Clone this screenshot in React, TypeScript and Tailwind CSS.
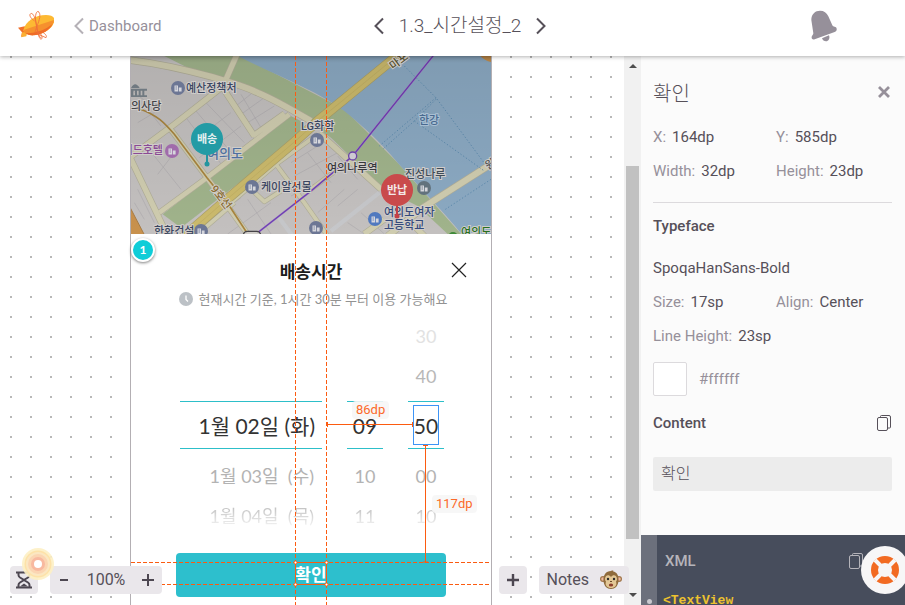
import type { ReactNode } from "react";

const KR = "font-['Roboto','Noto_Sans_CJK_KR',sans-serif]";

function Logo() {
  return (
    <svg width="36" height="30" viewBox="0 0 108 90" aria-hidden="true">
      <path d="M0 50l20-4 8 20-19 12 3-14z" fill="#f0702a" />
      <path d="M12 64l16 0-3 12-15 3z" fill="#fbb034" />
      <path d="M16 58C22 30 52 12 84 12c14 0 24 4 25 12 2 22-24 44-58 48-20 2-32-4-35-14z" fill="#fdb933" />
      <path d="M16 57l92-30c-2 22-26 42-58 45-20 2-32-5-34-15z" fill="#f6912e" />
      <path d="M23 66c24 2 54-6 80-26-9 18-30 30-54 33-12 1-20-2-26-7z" fill="#ef6c27" />
      <g fill="none" stroke="#f0703a" strokeWidth="2.6">
        <path d="M50 30C38 22 32 12 38 8s14 10 18 36 8 42 14 40 0-16-14-28" />
        <path d="M62 2c-8-4-12 14-8 36s10 44 16 42M60 2c6 2 8 12 2 30s-16 38-6 30M56 68l28 12c4-4-2-12-10-16" />
      </g>
    </svg>
  );
}

function Chevron({ dir, className }: { dir: "left" | "right"; className: string }) {
  return (
    <svg width="10" height="18" viewBox="0 0 10 18" fill="none" strokeWidth="2" className={className} aria-hidden="true">
      <path d={dir === "left" ? "M9 1.500L1.500 9L9 16.500" : "M1 1.500L8.500 9L1 16.500"} stroke="currentColor" />
    </svg>
  );
}

function BellIcon() {
  return (
    <svg width="28" height="32" viewBox="0 0 84 96" fill="#96909a" aria-hidden="true">
      <path d="M4 30C4 12 16 2 30 2c12 0 20 6 25 17l12 27c2 5 12 3 13 10 1 5-2 8-6 10L14 88c-6 2-10-2-9-7 0-4 5-6 5-11z" />
      <path d="M36 85l21-9c4 10-2 18-9 18-6 0-10-3-12-9z" />
    </svg>
  );
}

function CopyIcon() {
  return (
    <svg width="14" height="16" viewBox="0 0 14 16" fill="none" stroke="currentColor" aria-hidden="true">
      <rect x=".5" y="2.500" width="10" height="13" rx="1.500" />
      <path d="M3.500 2.500V1.500a1 1 0 0 1 1-1h7.500a1.500 1.500 0 0 1 1.500 1.500v10a1 1 0 0 1-1 1h-2" />
    </svg>
  );
}

function Header() {
  return (
    <header className="relative z-20 grid h-14 shrink-0 grid-cols-[1fr_auto_1fr] items-center bg-white pl-[18px] pr-[3px] shadow-[0_1px_4px_rgba(0,0,0,0.3)]">
      <div className="flex items-center gap-5 pb-1">
        <a href="#home" aria-label="Home">
          <Logo />
        </a>
        <a href="#dashboard" className="flex items-center gap-[5px] text-[15px] text-[#96909a]">
          <Chevron dir="left" className="text-[#b5b1b7]" />
          Dashboard
        </a>
      </div>
      <nav className="flex items-center gap-[15px] pb-1 text-[#565059]">
        <button aria-label="Previous screen">
          <Chevron dir="left" className="text-[#565059]" />
        </button>
        <h1 className="text-[19px] leading-7 font-light">1.3_시간설정_2</h1>
        <button aria-label="Next screen">
          <Chevron dir="right" className="text-[#565059]" />
        </button>
      </nav>
      <button aria-label="Notifications" className="mr-16 justify-self-end pb-1">
        <BellIcon />
      </button>
    </header>
  );
}

function MapIcon({ x, y, fill = "#6c7694" }: { x: number; y: number; fill?: string }) {
  return (
    <g transform={`translate(${x} ${y})`}>
      <circle r="7" fill={fill} />
      <path d="M-3.500 3.500v-6h3.500v6zM.8 3.500v-4h2.800v4z" fill="#d5d6dc" />
      <path d="M-2.500-1h1.500M-2.500 1h1.500" stroke={fill} strokeWidth=".8" />
    </g>
  );
}

const places = [
  { x: 61, y: 42, text: "예산정책처", fill: "#3a4560" },
  { x: 6, y: 60, text: "의사당", fill: "#444448" },
  { x: 176, y: 80, text: "LG화학", fill: "#3a4560" },
  { x: 136, y: 141, text: "케이알선물", fill: "#3a4560" },
  { x: 29, y: 185, text: "한화건설", fill: "#3a4560" },
  { x: 202, y: 122, text: "여의나루역", fill: "#38383c" },
  { x: 280, y: 128, text: "진성나루", fill: "#3f4c58" },
  { x: 259, y: 166, text: "여의도여자", fill: "#354a7a" },
  { x: 259, y: 179, text: "고등학교", fill: "#354a7a" },
  { x: 336, y: 186, text: "여의도", fill: "#28701f" },
];

function CityMap() {
  return (
    <svg viewBox="6 6 360 178" preserveAspectRatio="xMidYMid slice" className="block h-[178px] w-full" role="img" aria-label="여의도">
      <defs>
        <linearGradient id="shade" x1="0" y1="0" x2="0" y2="1">
          <stop offset="0" stopColor="#000" stopOpacity=".15" />
          <stop offset=".04" stopColor="#000" stopOpacity=".08" />
          <stop offset="1" stopColor="#000" stopOpacity="0" />
        </linearGradient>
      </defs>
      <rect x="6" y="6" width="360" height="178" fill="#c3c0bf" />
      <g transform="translate(6 6) scale(.33333)">
        {/* Park and river */}
        <path d="M100 0H330L640 160 800 320 990 534H950L860 450 760 400 600 245 520 190 440 140 330 90 200 50Z" fill="#a0b38b" />
        <path d="M320 0H1080V534H992C960 495 945 480 900 430C860 385 840 365 800 320C750 260 690 205 640 165C560 105 440 60 320 0Z" fill="#8ba9c2" />
        <path d="M95 475L475 178 520 200 500 245 150 515Z" fill="#a0b38b" />
        {/* Lots */}
        <g fill="none" stroke="#adaaae" strokeWidth="2">
          <path d="M165 185L275 330M195 165L310 300M225 140L340 260M175 265L300 170M205 305L330 210M315 150L365 110M330 175L400 125M350 200L430 150M330 115L390 215M50 275L150 400M80 355L130 290M0 100L60 150M50 160L90 210M20 200L70 170" />
          <path d="M250 480L330 425M290 534L420 440M350 430L420 534M480 320L560 270M490 360L620 290M530 290L600 380M620 300L680 370M640 400L560 470M680 400L620 450M480 420L560 380M650 500L700 534M690 470L760 534M360 360L420 400M190 534L260 480M20 400L70 500M10 440L40 490" />
        </g>
        {/* Street outlines, then surfaces */}
        {[
          { c: "#b0ad98", w: 4 },
          { c: "#cfccaf", w: 0 },
        ].map(({ c, w }) => (
          <g key={c} fill="none" stroke={c} strokeLinejoin="round">
            <path d="M-5 12C80 22 160 40 240 62C300 80 340 90 380 110C430 130 480 160 540 195" strokeWidth={18 + w} />
            <path d="M318 -5L285 70M290 80L130 205 -5 305M275 95L370 240M-5 300L110 540" strokeWidth={16 + w} />
            <path d="M115 215L228 365 350 534M85 470L228 365 475 175M365 240L460 172" strokeWidth={14 + w} />
            <path d="M300 440L435 325 560 235M435 325L520 440 590 540M345 385L400 437 465 395M520 415L640 325M200 534L310 440" strokeWidth={11 + w} />
            <path d="M565 232L750 400M700 534L760 490M840 500L880 540" strokeWidth={16 + w} />
            <path d="M770 540L880 452 1090 318" strokeWidth={18 + w} />
          </g>
        ))}
        <path d="M600 525L745 410M440 480L485 540" stroke="#c6c7ca" strokeWidth="13" />
        <path d="M155 545L290 428 490 258 560 195 810 -10" fill="none" stroke="#aa9f68" strokeWidth="30" />
        <path d="M155 545L290 428 490 258 560 195 810 -10" fill="none" stroke="#cbba6c" strokeWidth="26" />
        <path d="M155 545L290 428 490 258 560 195 810 -10" fill="none" stroke="#beac60" strokeWidth="2" />
        <path d="M-5 450L42 540H-5Z" fill="#c8914d" stroke="#a77b45" strokeWidth="3" />
        <path d="M1040 -10Q1060 18 1085 18V-10Z" fill="#c8914d" />
        {/* Ferry routes */}
        <path
          d="M820 30L915 125L1070 335M915 125L745 270M850 195L755 280M915 130L850 195M850 195L1060 345M1080 370L940 462"
          fill="none"
          stroke="#5d8bae"
          strokeWidth="3"
          strokeDasharray="4 6"
        />
        <path d="M25 158C80 178 100 200 130 235L228 365 290 442 350 534" fill="none" stroke="#a8843e" strokeWidth="5" />
        <path d="M375 534L540 405 665 300 910 -5" fill="none" stroke="#a893c6" strokeWidth="6" />
        <path d="M375 534L540 405 665 300 910 -5" fill="none" stroke="#713fb5" strokeWidth="4" />
        <circle cx="665" cy="300" r="12" fill="#d5d2da" stroke="#7045ae" strokeWidth="4" />
        <rect x="337" y="526" width="52" height="24" rx="12" fill="#d0cdc9" stroke="#454347" strokeWidth="4" />
        <path d="M-5 98H48V104H-5ZM0 96Q12 74 26 96ZM0 104H7V118H0ZM12 104H18V118H12ZM23 104H29V118H23ZM34 104H40V118H34ZM-5 118H48V123H-5Z" fill="#78828a" />
      </g>
      <rect x="6" y="6" width="360" height="178" fill="url(#shade)" />
      <MapIcon x={53} y={38} />
      <MapIcon x={47} y={101} fill="#a06bab" />
      <MapIcon x={127} y={137} />
      <MapIcon x={76} y={181} />
      <MapIcon x={192} y={90} />
      <MapIcon x={191} y={178} />
      <MapIcon x={299} y={138} fill="#62727d" />
      <MapIcon x={250} y={169} fill="#5079bf" />
      <circle cx="328" cy="187" r="5" fill="#3f8a38" />
      <g className="text-[11px] font-medium" stroke="#cfccca" strokeWidth="2" paintOrder="stroke">
        {places.map((p) => (
          <text key={p.text} x={p.x} y={p.y} fill={p.fill}>
            {p.text}
          </text>
        ))}
        <text x="82" y="108" fill="#4d6f9f" className="text-[13px]">
          여의도
        </text>
        <text x="294" y="74" fill="#48698f" stroke="#a9bfd2">
          한강
        </text>
        <text x="38" y="104" textAnchor="end" fill="#8a4a94">
          콘래드호텔
        </text>
        <text x="85" y="139" transform="rotate(52 85 139)" fill="#8a6d2f">
          9호선
        </text>
        <text x="268" y="20" transform="rotate(-37 268 20)" fill="#55502f">
          마포
        </text>
        <text x="363" y="120" transform="rotate(-32 363 120)" fill="#555">
          원
        </text>
      </g>
      {/* Pick-up and return pins */}
      <g textAnchor="middle" className="text-[11px] font-bold">
        <path d="M82 102V114" stroke="#23959f" strokeWidth="2" />
        <circle cx="82" cy="114" r="2.500" fill="#23959f" />
        <circle cx="82" cy="89" r="16" fill="#239ba5" />
        <text x="82" y="93" fill="#e6f0f0">
          배송
        </text>
        <path d="M272 152V165" stroke="#c44146" strokeWidth="2" />
        <circle cx="272" cy="166" r="2.500" fill="#c44146" />
        <circle cx="272" cy="140" r="16" fill="#c94a4b" />
        <text x="272" y="144" fill="#f3e8e8">
          반납
        </text>
      </g>
    </svg>
  );
}

type Cell = { text: string; tone: string };

function PickerColumn({
  before,
  selected,
  after,
  className,
}: {
  before: Cell[];
  selected: Cell;
  after: Cell[];
  className: string;
}) {
  return (
    <div className={`flex flex-col justify-end text-lg ${className}`}>
      {before.map((c) => (
        <div key={c.text} className={`h-10 leading-10 ${c.tone}`}>
          {c.text}
        </div>
      ))}
      <div className={`mt-[5px] mb-[7px] h-12 border-y border-[#2dbfc9] text-[21px] leading-[48px] ${selected.tone}`}>{selected.text}</div>
      {after.map((c) => (
        <div key={c.text} className={`h-10 leading-10 whitespace-pre ${c.tone}`}>
          {c.text}
        </div>
      ))}
    </div>
  );
}

const picked = "text-[#333]";
const fadeNear = "text-[#b3b3b3]";
const fadeFar = "bg-gradient-to-b from-[#c4c4c4] from-30% to-[#f2f2f2] to-75% bg-clip-text text-transparent";

function Sheet() {
  return (
    <section className="relative px-[45px] pt-6 font-['Lato','Noto_Sans_CJK_KR',sans-serif]">
      <span className="absolute top-1 left-0 flex size-6 items-center justify-center rounded-full border-2 border-white bg-[#10cdd8] text-xs font-bold text-white shadow-[0_1px_3px_rgba(0,0,0,0.5)]">
        1
      </span>
      <h2 className="text-center text-[17px] leading-7 font-bold text-[#1c1c1c]">배송시간</h2>
      <button aria-label="닫기" className="absolute top-7 right-6">
        <svg width="16" height="16" viewBox="0 0 16 16" stroke="#222" strokeWidth="1.200">
          <path d="M1 1l14 14M15 1L1 15" />
        </svg>
      </button>
      <p className="-mx-2 mt-[3px] flex items-center justify-center gap-[6px] pl-1 text-[13px] leading-5 whitespace-nowrap text-[#929292]">
        <svg width="14" height="14" viewBox="0 0 14 14" className="shrink-0">
          <circle cx="7" cy="7" r="7" fill="#bcc1c6" />
          <path d="M7 3.500V7.500l2 2" fill="none" stroke="#fff" strokeWidth="1.300" />
        </svg>
        현재시간 기준, 1시간 30분 부터 이용 가능해요
      </p>
      <div className="mt-[7px] flex justify-center gap-[25px] pr-[2px] pl-1">
        <PickerColumn
          className="w-[142px] text-right"
          before={[]}
          selected={{ text: "1월 02일 (화)", tone: `pr-[7px] ${picked}` }}
          after={[
            { text: "1월 03일  (수)", tone: `pr-2 ${fadeNear}` },
            { text: "1월 04일  (목)", tone: `pr-2 ${fadeFar}` },
          ]}
        />
        <PickerColumn
          className="w-9 text-center"
          before={[]}
          selected={{ text: "09", tone: picked }}
          after={[
            { text: "10", tone: fadeNear },
            { text: "11", tone: fadeFar },
          ]}
        />
        <PickerColumn
          className="w-9 text-center"
          before={[
            { text: "30", tone: "text-[#e2e2e2]" },
            { text: "40", tone: "text-[#b8b8b8]" },
          ]}
          selected={{ text: "50", tone: picked }}
          after={[
            { text: "00", tone: fadeNear },
            { text: "10", tone: fadeFar },
          ]}
        />
      </div>
      <button className="mt-[17px] h-11 w-full rounded bg-[#2dbfcd] text-[17px] font-bold text-white">확인</button>
    </section>
  );
}

function Measurements() {
  return (
    <div className="pointer-events-none absolute inset-0">
      <svg className="absolute inset-0 h-full w-full" fill="none" stroke="#fc5b10">
        <g strokeDasharray="4 2">
          <path d="M164.500 0V900M195.500 0V900" />
          <path d="M0 506.500H360M0 528.500H360" />
        </g>
        <path d="M164.500 506.500h31v22h-31z" />
        <g fill="#fff">
          <circle cx="164.500" cy="506.500" r="1.500" />
          <circle cx="195.500" cy="506.500" r="1.500" />
          <circle cx="164.500" cy="528.500" r="1.500" />
          <circle cx="195.500" cy="528.500" r="1.500" />
        </g>
        <path d="M196 368.500h86M196.500 366v5M281.500 366v5M294.500 389V506M292 389.500h5M292 506h5" />
        <rect x="282.500" y="349.500" width="25" height="39" stroke="#3d94f6" />
      </svg>
      <span className="absolute top-[345px] left-[221px] rounded-sm bg-[#f6f6f6]/90 px-1 text-[13px] leading-[18px] text-[#fc6a2a]">86dp</span>
      <span className="absolute top-[439px] left-[301px] rounded-sm bg-[#f6f6f6]/90 px-1 text-[13px] leading-[18px] text-[#fc6a2a]">117dp</span>
    </div>
  );
}

function Monkey() {
  return (
    <svg width="22" height="20" viewBox="0 0 22 20" aria-hidden="true">
      <circle cx="3" cy="9" r="3" fill="#a0764a" />
      <circle cx="19" cy="9" r="3" fill="#a0764a" />
      <circle cx="3" cy="9" r="1.800" fill="#f0b8a0" />
      <circle cx="19" cy="9" r="1.800" fill="#f0b8a0" />
      <path d="M11 1c2-1 3 0 2 .6C17 2 19 6 18.500 11c-.4 5-3.500 8-7.500 8s-7.100-3-7.500-8C3 5 6 1 11 1z" fill="#8f6b3c" />
      <path d="M11 7c2-3 6-2 6 2 0 1-.5 2-1 2.500 1.500 4-1.500 6.500-5 6.500s-6.500-2.500-5-6.500C5.500 11 5 10 5 9c0-4 4-5 6-2z" fill="#e3c795" />
      <circle cx="8" cy="9" r="1.200" fill="#2c2c2c" />
      <circle cx="14" cy="9" r="1.200" fill="#2c2c2c" />
      <path d="M10 11.500h2" stroke="#6b4a28" />
      <ellipse cx="11" cy="15" rx="2.200" ry="1.500" fill="#8d3f2c" />
    </svg>
  );
}

const chip = "flex h-7 items-center rounded bg-[#eae7eb] text-[#565059]";

function Toolbar() {
  return (
    <div className="absolute right-3 bottom-[11px] left-[10px] flex justify-between">
      <div className="flex gap-3">
        <button aria-label="History" className={`${chip} relative w-7 justify-center`}>
          <svg width="16" height="18" viewBox="0 0 16 18" fill="none" stroke="#4d4751" strokeWidth="2">
            <path d="M0 1.500H16M0 16.500H16M2.500 2V4Q2.500 5.500 4 6.500L8 9 4 11.500Q2.500 12.500 2.500 14V16M13.500 2V4Q13.500 5.500 12 6.500L8 9l4 2.500Q13.500 12.500 13.500 14V16" />
            <path d="M4 15.500L8 12.500l4 3z" fill="#4d4751" stroke="none" />
          </svg>
          <svg className="absolute -top-[18px] left-3" width="32" height="32" viewBox="0 0 32 32">
            <circle cx="16" cy="16" r="16" fill="#fdf0c4" fillOpacity=".9" />
            <circle cx="16" cy="16" r="13.500" fill="#fde2a8" />
            <circle cx="16" cy="16" r="12" fill="#fbe7c2" />
            <circle cx="16" cy="16" r="10" fill="#fbd5b2" />
            <circle cx="16" cy="16" r="7" fill="#f8b9a0" />
            <circle cx="16" cy="16" r="4" fill="#fff" />
          </svg>
        </button>
        <div className={`${chip} w-28 justify-between px-2`}>
          <button aria-label="Zoom out">
            <svg width="12" height="12" stroke="#4d4751" strokeWidth="2">
              <path d="M2 6h8" />
            </svg>
          </button>
          <span className="text-base">100%</span>
          <button aria-label="Zoom in">
            <svg width="12" height="12" stroke="#4d4751" strokeWidth="2">
              <path d="M0 6h12M6 0v12" />
            </svg>
          </button>
        </div>
      </div>
      <div className="flex gap-3">
        <button aria-label="Add" className={`${chip} w-7 justify-center`}>
          <svg width="12" height="12" stroke="#4d4751" strokeWidth="2.400">
            <path d="M0 6h12M6 0v12" />
          </svg>
        </button>
        <button className={`${chip} gap-[11px] px-[7px] text-base`}>
          Notes
          <Monkey />
        </button>
      </div>
    </div>
  );
}

function ScrollBar() {
  return (
    <div className="flex w-[17px] shrink-0 flex-col items-center bg-[#f1f1f1] py-2">
      <svg width="8" height="4" className="fill-[#4d4d4d]">
        <path d="M0 4L4 0l4 4z" />
      </svg>
      <div className="grow-[98]" />
      <div className="w-[13px] grow-[373] bg-[#c1c1c1]" />
      <div className="grow-[54]" />
      <svg width="8" height="4" className="fill-[#4d4d4d]">
        <path d="M0 0h8L4 4z" />
      </svg>
    </div>
  );
}

function Field({ label, value }: { label: string; value: string }) {
  return (
    <div className="flex gap-[6px]">
      <dt className="text-[#96909a]">{label}:</dt>
      <dd>{value}</dd>
    </div>
  );
}

function Fields({ children }: { children: ReactNode }) {
  return <dl className="grid grid-cols-[123px_1fr] gap-y-[14px] leading-5">{children}</dl>;
}

function Inspector() {
  return (
    <aside className="flex w-[264px] shrink-0 flex-col bg-[#fbfbfb] text-[15px] text-[#565059]">
      <div className="flex min-h-0 grow flex-col pt-6 pr-[13px] pl-3">
        <div className="flex items-center justify-between">
          <h2 className="text-xl leading-7 font-light">확인</h2>
          <button aria-label="Close" className="mr-[2px] mb-1">
            <svg width="12" height="12" stroke="#96909a" strokeWidth="2.800">
              <path d="M1 1l10 10M11 1L1 11" />
            </svg>
          </button>
        </div>
        <div className="mt-[19px] border-b border-[#dcdadd] pb-[21px]">
          <Fields>
            <Field label="X" value="164dp" />
            <Field label="Y" value="585dp" />
            <Field label="Width" value="32dp" />
            <Field label="Height" value="23dp" />
          </Fields>
        </div>
        <h3 className="mt-[13px] leading-5 font-medium">Typeface</h3>
        <p className="mt-[22px] mb-[14px] leading-5">SpoqaHanSans-Bold</p>
        <Fields>
          <Field label="Size" value="17sp" />
          <Field label="Align" value="Center" />
          <Field label="Line Height" value="23sp" />
        </Fields>
        <div className="mt-4 flex items-center gap-3">
          <span className="size-[34px] rounded-xs border border-[#dcdadd] bg-white" />
          <span className="text-[#96909a]">#ffffff</span>
        </div>
        <div className="mt-[17px] flex items-center justify-between pr-px">
          <h3 className="leading-5 font-medium">Content</h3>
          <button aria-label="Copy content">
            <CopyIcon />
          </button>
        </div>
        <p className="mt-6 rounded-xs bg-[#ececec] px-2 text-base leading-[34px] font-light">확인</p>
      </div>
      <div className="flex h-[70px] shrink-0 overflow-hidden bg-[#474d5c]">
        <div className="flex w-4 shrink-0 justify-center bg-[#6c707c] pt-16">
          <span className="size-[5px] shrink-0 rounded-full bg-[#c9c9cf]" />
        </div>
        <div className="grow">
          <div className="flex items-center justify-between pt-4 pr-[42px] pl-2 text-[#b5b4ba]">
            <h3 className="leading-5 font-medium">XML</h3>
            <button aria-label="Copy XML">
              <CopyIcon />
            </button>
          </div>
          <pre className="mt-5 pl-[6px] font-['Liberation_Mono',monospace] text-[13px] leading-5 font-bold text-[#edc22e]">
            {"<TextView"}
          </pre>
        </div>
      </div>
    </aside>
  );
}

export default function App() {
  return (
    <div className={`flex h-screen flex-col overflow-hidden ${KR}`}>
      <Header />
      <div className="flex min-h-0 grow">
        <main className="relative flex min-w-0 grow">
          <div className="flex min-w-0 grow justify-center overflow-hidden bg-white bg-[conic-gradient(from_90deg_at_2px_2px,transparent_50%,#b8b8b8_50%_75%,transparent_75%)] bg-[length:20px_20px] bg-[position:10px_0] pr-[2px]">
            <div className="relative w-[362px] shrink-0 border-x border-[#b3afb3] bg-white">
              <CityMap />
              <Sheet />
              <Measurements />
            </div>
          </div>
          <ScrollBar />
          <Toolbar />
        </main>
        <Inspector />
      </div>
      <button
        aria-label="Help"
        className="fixed -right-1 bottom-[11px] z-30 flex size-12 items-center justify-center rounded-full bg-[#f7f6f7]"
      >
        <svg width="28" height="28" viewBox="0 0 28 28" fill="none">
          <circle cx="14" cy="14" r="10.500" stroke="#f26a22" strokeWidth="7" />
          <path d="M4 4l6 6M24 4l-6 6M4 24l6-6M24 24l-6-6" stroke="#f7f6f7" strokeWidth="4" />
        </svg>
      </button>
    </div>
  );
}
